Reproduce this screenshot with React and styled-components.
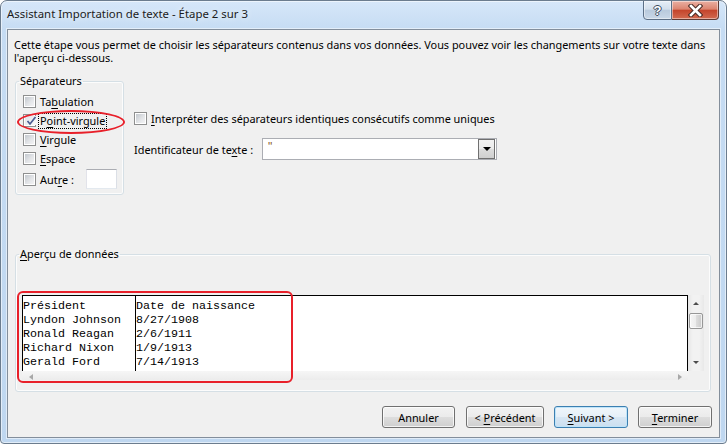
import React from "react";
import styled, { createGlobalStyle } from "styled-components";

const UI = `"Noto Sans", "Open Sans", "Liberation Sans", sans-serif`;
const MONO = `"Liberation Mono", "DejaVu Sans Mono", monospace`;

const GlobalStyle = createGlobalStyle`
  html, body { margin: 0; padding: 0; background: #ffffff; }
  body { width: 727px; height: 444px; overflow: hidden; }
  #root { width: 727px; height: 444px; }
  *, *::before, *::after { box-sizing: border-box; }
`;

const Window = styled.div`
  position: relative;
  width: 727px;
  height: 444px;
  display: flex;
  flex-direction: column;
  border: 1px solid #6b7c8e;
  border-radius: 7px 7px 4px 4px;
  background: linear-gradient(180deg, #d6e7f9 0px, #c6dcf3 28px, #bfd7f0 100%);
  box-shadow: inset 0 0 0 1px rgba(255, 255, 255, 0.55);
  font-family: ${UI};
  font-size: 10.9px;
  color: #000;
  overflow: hidden;
`;

const TitleBar = styled.div`
  flex: none;
  height: 28px;
  display: flex;
  align-items: flex-start;
  padding: 0 7px 0 6px;
`;

const Title = styled.div`
  flex: 1;
  line-height: 26px;
  font-size: 11.4px;
  color: #1b1b1b;
  white-space: nowrap;
  text-shadow: 0 0 6px rgba(255, 255, 255, 0.9);
`;

const Caption = styled.div`
  display: flex;
  margin-top: -1px;
`;

const CaptionBtn = styled.div`
  height: 20px;
  width: ${(p) => p.$w}px;
  display: flex;
  align-items: center;
  justify-content: center;
  border: 1px solid ${(p) => (p.$close ? "#5e3b35" : "#5c6f86")};
  border-left-width: ${(p) => (p.$close ? 0 : 1)}px;
  border-radius: ${(p) => (p.$close ? "0 0 4px 0" : "0 0 0 4px")};
  background: ${(p) =>
    p.$close
      ? "linear-gradient(180deg, #eab0a3 0%, #dc8470 45%, #c4452c 52%, #d26a50 100%)"
      : "linear-gradient(180deg, #e6eef7 0%, #d3dfec 45%, #b9cadd 52%, #c9d8e8 100%)"};
  box-shadow: inset 0 0 0 1px rgba(255, 255, 255, 0.45);
`;

const HelpGlyph = styled.span`
  font-family: "Liberation Sans", sans-serif;
  font-weight: 700;
  font-size: 13px;
  line-height: 1;
  color: #fff;
  text-shadow: 1px 0 0 #3b4b5e, -1px 0 0 #3b4b5e, 0 1px 0 #3b4b5e, 0 -1px 0 #3b4b5e;
`;

const Client = styled.div`
  flex: 1;
  margin: 0 6px 5px 6px;
  border: 1px solid #838e9b;
  background: #f0f0f0;
  display: flex;
  flex-direction: column;
  padding: 8px 8px 0 7px;
  box-shadow: 0 0 0 1px rgba(255, 255, 255, 0.5);
`;

const Intro = styled.p`
  margin: 0 0 0 -1px;
  line-height: 13px;
  white-space: nowrap;
`;

const TopRow = styled.div`
  display: flex;
  align-items: flex-start;
  margin-top: 10px;
`;

const Group = styled.fieldset`
  margin: ${(p) => p.$mt || 0}px 0 0 0;
  min-width: 0;
  width: ${(p) => p.$w || "auto"};
  padding: ${(p) => p.$pad};
  border: 1px solid #d5dfe5;
  border-radius: 3px;
  box-shadow: inset 0 0 0 1px rgba(255, 255, 255, 0.8);
`;

const Legend = styled.legend`
  padding: 0 1px;
  line-height: 14px;
  font-size: 10.9px;
`;

const Rows = styled.div`
  display: flex;
  flex-direction: column;
  margin-left: 4px;
`;

const Row = styled.label`
  display: flex;
  align-items: center;
  height: ${(p) => p.$h || 19}px;
  white-space: nowrap;
`;

const Box = styled.span`
  width: 13px;
  height: 13px;
  flex: none;
  border: 1px solid #8e8f8f;
  background: #fff;
  padding: 1px;
  display: flex;
  margin-right: 4px;
`;

const BoxInner = styled.span`
  flex: 1;
  display: flex;
  align-items: center;
  justify-content: center;
  background: ${(p) =>
    p.$checked
      ? "linear-gradient(135deg, #dfe3ea 0%, #f1f2f4 60%, #fafafa 100%)"
      : "linear-gradient(135deg, #c3c8ce 0%, #e2e4e7 55%, #f3f3f4 100%)"};
`;

const Text = styled.span`
  display: inline-block;
  width: ${(p) => (p.$w ? `${p.$w}px` : "auto")};
  ${(p) =>
    p.$focus &&
    `
    margin-left: -2px;
    padding: 0 1px;
    border: 1px dotted #000;
    line-height: 14px;
  `}
`;

const Acc = styled.span`
  text-decoration: underline;
  text-underline-offset: 2px;
  text-decoration-thickness: 1px;
`;

const SmallInput = styled.span`
  width: 31px;
  height: 20px;
  background: #fff;
  border: 1px solid;
  border-color: #abadb3 #dbdfe6 #e3e9ef #e2e3ea;
`;

const Options = styled.div`
  display: flex;
  flex-direction: column;
  margin-left: 10px;
  padding-top: 35px;
`;

const ComboRow = styled.div`
  display: flex;
  align-items: center;
  margin-top: 10px;
`;

const ComboLabel = styled.span`
  width: 128px;
  white-space: nowrap;
`;

const Combo = styled.div`
  width: 235px;
  height: 22px;
  display: flex;
  align-items: stretch;
  background: #fff;
  border: 1px solid #abadb3;
`;

const ComboValue = styled.span`
  flex: 1;
  padding-left: 5px;
  font-family: "Liberation Sans", sans-serif;
  font-size: 12px;
  line-height: 17px;
  color: #8b5a2b;
`;

const ComboBtn = styled.span`
  width: 17px;
  margin-right: 1px;
  display: flex;
  align-items: center;
  justify-content: center;
  border: 1px solid #707070;
  background: linear-gradient(180deg, #f2f2f2 0%, #ebebeb 50%, #dddddd 51%, #cfcfcf 100%);
`;

const Tri = styled.span`
  width: 0;
  height: 0;
  border-left: ${(p) => p.$s || 4}px solid transparent;
  border-right: ${(p) => p.$s || 4}px solid transparent;
  border-top: ${(p) => p.$s || 4}px solid ${(p) => p.$c || "#000"};
  ${(p) => p.$up && `transform: rotate(180deg);`}
`;

const HTri = styled.span`
  width: 0;
  height: 0;
  border-top: 3px solid transparent;
  border-bottom: 3px solid transparent;
  ${(p) => (p.$left ? "border-right" : "border-left")}: 4px solid #a8a8a8;
`;

const Preview = styled.div`
  display: flex;
  flex-direction: column;
  margin-left: 3px;
`;

const PreviewTop = styled.div`
  display: flex;
  height: 76px;
`;

const DataArea = styled.div`
  width: 666px;
  display: flex;
  background: #fff;
  border: 1px solid #000;
  border-bottom: 0;
  font-family: ${MONO};
  font-size: 11.67px;
  line-height: 14px;
  overflow: hidden;
`;

const Column = styled.div`
  width: ${(p) => (p.$w ? `${p.$w}px` : "auto")};
  flex: ${(p) => (p.$w ? "none" : 1)};
  padding-top: 3px;
  ${(p) => p.$sep && "border-left: 1px solid #000;"}
  white-space: pre;
`;

const Cell = styled.div`
  height: 14px;
`;

const VScroll = styled.div`
  width: 16px;
  display: flex;
  flex-direction: column;
  align-items: center;
  background: linear-gradient(90deg, #e6e6e6 0%, #f2f2f2 30%, #f2f2f2 70%, #e8e8e8 100%);
`;

const ArrowCell = styled.div`
  height: 17px;
  width: 100%;
  display: flex;
  align-items: center;
  justify-content: center;
`;

const Thumb = styled.div`
  width: 14px;
  height: 16px;
  margin-top: 1px;
  border: 1px solid #979797;
  border-radius: 2px;
  background: linear-gradient(90deg, #f6f6f6 0%, #ececec 50%, #dedede 51%, #c9c9c9 100%);
  box-shadow: inset 0 0 0 1px rgba(255, 255, 255, 0.7);
`;

const Spacer = styled.div`
  flex: 1;
`;

const HScroll = styled.div`
  width: 666px;
  height: 9px;
  display: flex;
  align-items: center;
  justify-content: space-between;
  padding: 3px 6px 0 7px;
  background: linear-gradient(180deg, #f6f6f6 0%, #ececec 100%);
`;

const ButtonRow = styled.div`
  display: flex;
  justify-content: flex-end;
  gap: 10px;
  margin: 14px -1px 0 0;
`;

const Button = styled.button`
  width: ${(p) => p.$w}px;
  height: 22px;
  margin-right: ${(p) => p.$mr || 0}px;
  padding: 0;
  font-family: ${UI};
  font-size: 10.9px;
  color: #000;
  border: 1px solid ${(p) => (p.$default ? "#3c7fb1" : "#707070")};
  border-radius: 3px;
  background: ${(p) =>
    p.$default
      ? "linear-gradient(180deg, #f0f6fb 0%, #e5eff8 50%, #d7e6f3 51%, #cbdff0 100%)"
      : "linear-gradient(180deg, #f2f2f2 0%, #ebebeb 50%, #dddddd 51%, #cfcfcf 100%)"};
  box-shadow: inset 0 0 0 1px ${(p) => (p.$default ? "#bfe4f9" : "rgba(255,255,255,0.75)")};
`;

const Annotation = styled.div`
  position: absolute;
  left: ${(p) => p.$x}px;
  top: ${(p) => p.$y}px;
  width: ${(p) => p.$w}px;
  height: ${(p) => p.$h}px;
  border: 2px solid #e8202a;
  border-radius: ${(p) => p.$r};
  pointer-events: none;
`;

const CheckMark = () => (
  <svg width="11" height="10" viewBox="0 0 11 10" style={{ marginLeft: 1 }}>
    <path d="M1.5 5 L4 8 L9.5 1" fill="none" stroke="#4a5c92" strokeWidth="1.7" />
  </svg>
);

const CloseIcon = () => (
  <svg width="15" height="13" viewBox="0 0 15 13">
    <path d="M3 2 L12 11 M12 2 L3 11" stroke="#4a2b25" strokeWidth="4.6" strokeLinecap="square" />
    <path d="M3 2 L12 11 M12 2 L3 11" stroke="#ffffff" strokeWidth="2.6" strokeLinecap="square" />
  </svg>
);

const Checkbox = ({ checked }) => (
  <Box>
    <BoxInner $checked={checked}>{checked && <CheckMark />}</BoxInner>
  </Box>
);

const data = [
  ["Président", "Date de naissance"],
  ["Lyndon Johnson", "8/27/1908"],
  ["Ronald Reagan", "2/6/1911"],
  ["Richard Nixon", "1/9/1913"],
  ["Gerald Ford", "7/14/1913"],
];

export default function App() {
  return (
    <>
      <GlobalStyle />
      <Window>
        <TitleBar>
          <Title>Assistant Importation de texte - Étape 2 sur 3</Title>
          <Caption>
            <CaptionBtn $w={29}>
              <HelpGlyph>?</HelpGlyph>
            </CaptionBtn>
            <CaptionBtn $w={47} $close>
              <CloseIcon />
            </CaptionBtn>
          </Caption>
        </TitleBar>
        <Client>
          <Intro>
            Cette étape vous permet de choisir les séparateurs contenus dans vos données. Vous pouvez voir les changements sur votre texte dans
            <br />
            l'aperçu ci-dessous.
          </Intro>
          <TopRow>
            <Group $w="109px" $pad="4px 0 4px 3px">
              <Legend>Séparateurs</Legend>
              <Rows>
                <Row>
                  <Checkbox />
                  <Text>
                    Ta<Acc>b</Acc>ulation
                  </Text>
                </Row>
                <Row>
                  <Checkbox checked />
                  <Text $focus>
                    P<Acc>o</Acc>int-virgule
                  </Text>
                </Row>
                <Row>
                  <Checkbox />
                  <Text>
                    <Acc>V</Acc>irgule
                  </Text>
                </Row>
                <Row>
                  <Checkbox />
                  <Text>
                    <Acc>E</Acc>space
                  </Text>
                </Row>
                <Row $h={22}>
                  <Checkbox />
                  <Text $w={46}>
                    Aut<Acc>r</Acc>e :
                  </Text>
                  <SmallInput />
                </Row>
              </Rows>
            </Group>
            <Options>
              <Row>
                <Checkbox />
                <Text>
                  <Acc>I</Acc>nterpréter des séparateurs identiques consécutifs comme uniques
                </Text>
              </Row>
              <ComboRow>
                <ComboLabel>
                  Identificateur de te<Acc>x</Acc>te :
                </ComboLabel>
                <Combo>
                  <ComboValue>"</ComboValue>
                  <ComboBtn>
                    <Tri $s={4} />
                  </ComboBtn>
                </Combo>
              </ComboRow>
            </Options>
          </TopRow>
          <Group $mt={52} $pad="34px 6px 11px 3px">
            <Legend>
              <Acc>A</Acc>perçu de données
            </Legend>
            <Preview>
              <PreviewTop>
                <DataArea>
                  <Column $w={112}>
                    {data.map((r) => (
                      <Cell key={r[0]}>{r[0]}</Cell>
                    ))}
                  </Column>
                  <Column $sep>
                    {data.map((r) => (
                      <Cell key={r[1]}>{r[1]}</Cell>
                    ))}
                  </Column>
                </DataArea>
                <VScroll>
                  <ArrowCell>
                    <Tri $s={3} $c="#4d4d4d" $up />
                  </ArrowCell>
                  <Thumb />
                  <Spacer />
                  <ArrowCell>
                    <Tri $s={3} $c="#4d4d4d" />
                  </ArrowCell>
                </VScroll>
              </PreviewTop>
              <HScroll>
                <HTri $left />
                <HTri />
              </HScroll>
            </Preview>
          </Group>
          <ButtonRow>
            <Button $w={73} $mr={1}>Annuler</Button>
            <Button $w={78}>
              &lt; <Acc>P</Acc>récédent
            </Button>
            <Button $w={74} $default>
              <Acc>S</Acc>uivant &gt;
            </Button>
            <Button $w={74}>
              <Acc>T</Acc>erminer
            </Button>
          </ButtonRow>
        </Client>
        <Annotation $x={16} $y={109} $w={108} $h={24} $r="50%" />
        <Annotation $x={16} $y={290} $w={276} $h={92} $r="6px" />
      </Window>
    </>
  );
}
